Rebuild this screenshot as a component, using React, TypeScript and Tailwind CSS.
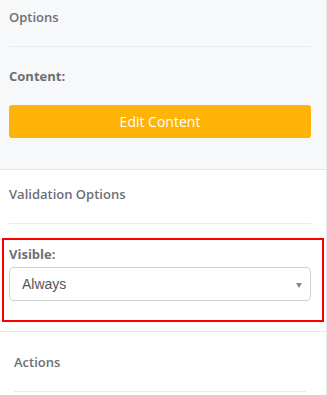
const Divider = () => <div className="h-px bg-[#e9ecef]" />;

const App = () => {
  return (
    <div className="w-[327px] h-[395px] overflow-hidden bg-white font-['Open_Sans',sans-serif] text-[13px] text-[#6c7075]">
      <div className="w-[327px] border-r border-[#e6e8eb]">
        {/* Options panel */}
        <div className="h-[170px] border-b border-[#e3e5e8] bg-[#f7f8fa] pl-[9px] pr-[15px] pt-[7px]">
          <h3 className="font-semibold leading-[20px]">Options</h3>
          <div className="mt-[19px]">
            <Divider />
          </div>
          <div className="mt-[19px] font-bold leading-[20px]">Content:</div>
          <button className="mt-[19px] h-[33px] w-full rounded-[3px] bg-[#ffb307] text-[14px] text-white">
            Edit Content
          </button>
        </div>

        {/* Validation */}
        <div className="border-b border-[#e3e5e8] pt-[14px] pb-[9px]">
          <div className="pl-[9px] pr-[15px]">
            <h3 className="font-semibold leading-[20px]">Validation Options</h3>
            <div className="mt-[19px]">
              <Divider />
            </div>
          </div>
          <div className="mt-[14px] ml-[2px] h-[84px] w-[322px] border-2 border-[#ff0000] pl-[5px] pr-[10px] pt-[4px]">
            <div className="font-bold leading-[20px]">Visible:</div>
            <div className="relative mt-[3px] flex h-[34px] w-[302px] items-center rounded-[4px] border border-[#cfd2d5] bg-white pl-[12px] font-['Liberation_Sans',sans-serif] text-[14px] text-[#555]">
              Always
              <span className="absolute right-[8px] top-[15px] h-0 w-0 border-x-[3.5px] border-t-[5px] border-x-transparent border-t-[#888]" />
            </div>
          </div>
        </div>

        {/* Actions */}
        <div className="h-[63px] pl-[14px] pr-[20px] pt-[20px]">
          <h3 className="font-semibold leading-[20px]">Actions</h3>
          <div className="mt-[19px]">
            <Divider />
          </div>
        </div>
      </div>
    </div>
  );
};

export default App;
